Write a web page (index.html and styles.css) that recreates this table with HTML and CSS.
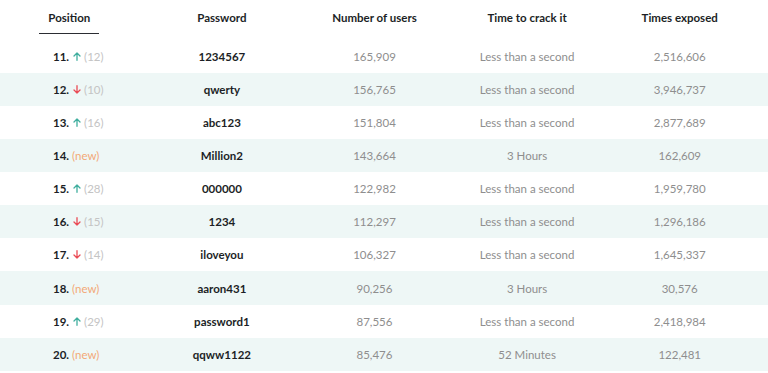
FILE: index.html
```html
<!DOCTYPE html>
<html>
<head>
<meta charset="utf-8">
<link rel="stylesheet" href="styles.css">
</head>
<body>
<div class="table">
  <div class="row head">
    <div class="cell"><span class="tab">Position</span></div>
    <div class="cell">Password</div>
    <div class="cell">Number of users</div>
    <div class="cell">Time to crack it</div>
    <div class="cell">Times exposed</div>
  </div>

  <div class="row">
    <div class="cell pos"><b>11.</b><svg class="arr up" viewBox="0 0 8 9"><path d="M4 8.3V1M1 4L4 1L7 4"/></svg><span class="prev">(12)</span></div>
    <div class="cell pw">1234567</div>
    <div class="cell num">165,909</div>
    <div class="cell num">Less than a second</div>
    <div class="cell num">2,516,606</div>
  </div>
  <div class="row alt">
    <div class="cell pos"><b>12.</b><svg class="arr down" viewBox="0 0 8 9"><path d="M4 0.7V8M1 5L4 8L7 5"/></svg><span class="prev">(10)</span></div>
    <div class="cell pw">qwerty</div>
    <div class="cell num">156,765</div>
    <div class="cell num">Less than a second</div>
    <div class="cell num">3,946,737</div>
  </div>
  <div class="row">
    <div class="cell pos"><b>13.</b><svg class="arr up" viewBox="0 0 8 9"><path d="M4 8.3V1M1 4L4 1L7 4"/></svg><span class="prev">(16)</span></div>
    <div class="cell pw">abc123</div>
    <div class="cell num">151,804</div>
    <div class="cell num">Less than a second</div>
    <div class="cell num">2,877,689</div>
  </div>
  <div class="row alt">
    <div class="cell pos"><b>14.</b><span class="new">(new)</span></div>
    <div class="cell pw">Million2</div>
    <div class="cell num">143,664</div>
    <div class="cell num">3 Hours</div>
    <div class="cell num">162,609</div>
  </div>
  <div class="row">
    <div class="cell pos"><b>15.</b><svg class="arr up" viewBox="0 0 8 9"><path d="M4 8.3V1M1 4L4 1L7 4"/></svg><span class="prev">(28)</span></div>
    <div class="cell pw">000000</div>
    <div class="cell num">122,982</div>
    <div class="cell num">Less than a second</div>
    <div class="cell num">1,959,780</div>
  </div>
  <div class="row alt">
    <div class="cell pos"><b>16.</b><svg class="arr down" viewBox="0 0 8 9"><path d="M4 0.7V8M1 5L4 8L7 5"/></svg><span class="prev">(15)</span></div>
    <div class="cell pw">1234</div>
    <div class="cell num">112,297</div>
    <div class="cell num">Less than a second</div>
    <div class="cell num">1,296,186</div>
  </div>
  <div class="row">
    <div class="cell pos"><b>17.</b><svg class="arr down" viewBox="0 0 8 9"><path d="M4 0.7V8M1 5L4 8L7 5"/></svg><span class="prev">(14)</span></div>
    <div class="cell pw">iloveyou</div>
    <div class="cell num">106,327</div>
    <div class="cell num">Less than a second</div>
    <div class="cell num">1,645,337</div>
  </div>
  <div class="row alt">
    <div class="cell pos"><b>18.</b><span class="new">(new)</span></div>
    <div class="cell pw">aaron431</div>
    <div class="cell num">90,256</div>
    <div class="cell num">3 Hours</div>
    <div class="cell num">30,576</div>
  </div>
  <div class="row">
    <div class="cell pos"><b>19.</b><svg class="arr up" viewBox="0 0 8 9"><path d="M4 8.3V1M1 4L4 1L7 4"/></svg><span class="prev">(29)</span></div>
    <div class="cell pw">password1</div>
    <div class="cell num">87,556</div>
    <div class="cell num">Less than a second</div>
    <div class="cell num">2,418,984</div>
  </div>
  <div class="row alt">
    <div class="cell pos"><b>20.</b><span class="new">(new)</span></div>
    <div class="cell pw">qqww1122</div>
    <div class="cell num">85,476</div>
    <div class="cell num">52 Minutes</div>
    <div class="cell num">122,481</div>
  </div>
</div>
</body>
</html>
```

FILE: styles.css
```css
html, body {
  margin: 0;
  padding: 0;
  background: #ffffff;
  overflow: hidden;
}
body {
  font-family: "Lato", "Noto Sans", sans-serif;
  font-size: 11.5px;
  color: #22252b;
}
.table {
  display: flex;
  flex-direction: column;
}
.row {
  display: grid;
  grid-template-columns: repeat(5, 1fr);
  align-items: center;
  height: 33.125px;
  margin-left: -7px;
  padding-right: 12px;
}
.row.alt {
  background: #eef7f6;
}
.row.head {
  height: 39.6px;
  align-items: start;
}
.head .cell {
  font-weight: 700;
  color: #1c1f26;
  padding-top: 11px;
}
.tab {
  display: inline-block;
  width: 60px;
  padding-bottom: 9px;
  border-bottom: 1.5px solid #2b2d33;
}
.cell {
  text-align: center;
  white-space: nowrap;
}
.cell.pos {
  text-align: left;
  padding-left: 60px;
  display: flex;
  align-items: center;
}
.pos b {
  font-weight: 700;
  color: #1c1f26;
  margin-right: 4px;
}
.pw {
  font-weight: 700;
  color: #1c1f26;
}
.num {
  color: #8e8e8e;
}
.prev {
  color: #c4c4c4;
  margin-left: 3px;
}
.new {
  color: #f3a976;
  margin-left: -1px;
}
.arr {
  width: 8px;
  height: 9px;
  fill: none;
  stroke-width: 1.3;
  stroke-linecap: round;
  stroke-linejoin: round;
}
.arr.up { stroke: #3fae9e; }
.arr.down { stroke: #ea4b55; }
```
